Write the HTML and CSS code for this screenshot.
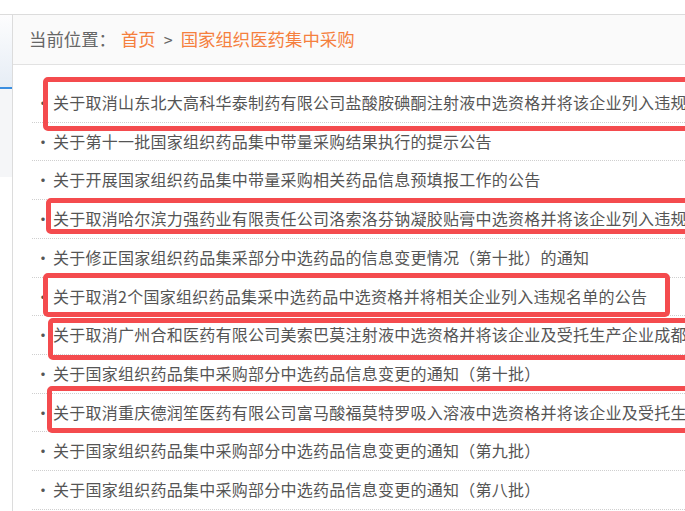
FILE: index.html
```html
<!DOCTYPE html>
<html lang="zh-CN">

<head>
  <meta charset="UTF-8" />
  <meta name="viewport" content="width=device-width, initial-scale=1.0" />
  <title>国家组织医药集中采购</title>
  <link rel="stylesheet" href="styles.css">
</head>

<body>

  <div class="topbar"></div>

  <div class="page">
    <div class="sidebar">
      <div class="side-head"></div>
      <div class="side-menu"></div>
    </div>

    <div class="main">
      <div class="crumb">
        <span class="crumb-label">当前位置：</span>
        <a class="crumb-link" href="#">首页</a>
        <span class="crumb-sep">&gt;</span>
        <a class="crumb-link" href="#">国家组织医药集中采购</a>
      </div>

      <ul class="news-list">
        <li>关于取消山东北大高科华泰制药有限公司盐酸胺碘酮注射液中选资格并将该企业列入违规名单的公告</li>
        <li>关于第十一批国家组织药品集中带量采购结果执行的提示公告</li>
        <li>关于开展国家组织药品集中带量采购相关药品信息预填报工作的公告</li>
        <li>关于取消哈尔滨力强药业有限责任公司洛索洛芬钠凝胶贴膏中选资格并将该企业列入违规名单的公告</li>
        <li>关于修正国家组织药品集采部分中选药品的信息变更情况（第十批）的通知</li>
        <li>关于取消2个国家组织药品集采中选药品中选资格并将相关企业列入违规名单的公告</li>
        <li>关于取消广州合和医药有限公司美索巴莫注射液中选资格并将该企业及受托生产企业成都列入违规名单的公告</li>
        <li>关于国家组织药品集中采购部分中选药品信息变更的通知（第十批）</li>
        <li>关于取消重庆德润笙医药有限公司富马酸福莫特罗吸入溶液中选资格并将该企业及受托生产企业列入违规名单的公告</li>
        <li>关于国家组织药品集中采购部分中选药品信息变更的通知（第九批）</li>
        <li>关于国家组织药品集中采购部分中选药品信息变更的通知（第八批）</li>
      </ul>
    </div>
  </div>

  <!-- hand-drawn highlight boxes over the list -->
  <div class="mark mark-1"></div>
  <div class="mark mark-2"></div>
  <div class="mark mark-3"></div>
  <div class="mark mark-4"></div>
  <div class="mark mark-5"></div>

</body>

</html>
```

FILE: styles.css
```css
body {
  font-family: "Noto Sans CJK SC", "Noto Sans", sans-serif;
  margin: 0;
  padding: 0;
  background: #fff;
  width: 685px;
  height: 511px;
  overflow: hidden;
  position: relative;
}

.topbar {
  height: 14px;
  border-bottom: 1px solid #dcdcdc;
}

.page {
  display: flex;
}

.sidebar {
  width: 12px;
  flex-shrink: 0;
  border-right: 1px solid #dcdcdc;
  height: 496px;
}

.side-head {
  height: 72px;
  background: linear-gradient(180deg, #fdfdfe, #e6edf5);
  border-bottom: 2px solid #3a8ee0;
}

.side-menu {
  height: 88px;
  background: #f5f6f8;
}

.main {
  flex: 1;
  min-width: 0;
}

.crumb {
  height: 50px;
  background: #fafafa;
  border-bottom: 1px solid #e2e2e2;
  display: flex;
  align-items: center;
  padding-left: 16px;
  padding-bottom: 2px;
  box-sizing: border-box;
  font-size: 17.4px;
  color: #666;
  white-space: nowrap;
}

.crumb-label {
  margin-right: 5px;
}

.crumb-link {
  color: #f5803e;
  text-decoration: none;
}

.crumb-sep {
  margin: 0 8px;
  font-size: 16px;
  color: #666;
}

.news-list {
  list-style: none;
  margin: 19px 0 0 19px;
  padding: 0;
}

.news-list li {
  line-height: 37.7px;
  border-bottom: 1px dotted #cfcfcf;
  white-space: nowrap;
  overflow: hidden;
  font-size: 16px;
  letter-spacing: 0.25px;
  color: #555;
}

.news-list li::before {
  content: "•";
  display: inline-block;
  width: 18px;
  padding-left: 3px;
  color: #555;
}

.mark {
  position: absolute;
  border: 5px solid #f44b4e;
  border-radius: 5px;
  box-sizing: border-box;
}

.mark-1 {
  left: 43px;
  top: 77px;
  width: 670px;
  height: 54px;
}

.mark-2 {
  left: 46px;
  top: 198px;
  width: 670px;
  height: 36px;
}

.mark-3 {
  left: 43px;
  top: 273px;
  width: 627px;
  height: 44px;
}

.mark-4 {
  left: 48px;
  top: 318px;
  width: 670px;
  height: 42px;
}

.mark-5 {
  left: 47px;
  top: 386px;
  width: 670px;
  height: 47px;
}
```
